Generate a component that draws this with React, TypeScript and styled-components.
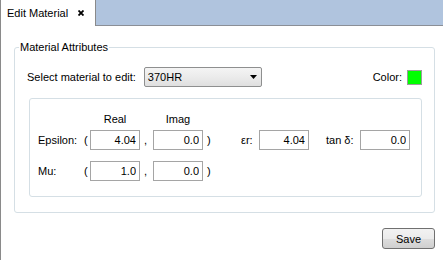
import styled, { createGlobalStyle } from 'styled-components';

const GlobalStyle = createGlobalStyle({
    body: {
        margin: 0,
        fontFamily: '"Liberation Sans", Arial, sans-serif',
        fontSize: '11px',
        color: '#000'
    }
});

const Window = styled.div({
    width: '443px',
    height: '260px',
    boxSizing: 'border-box',
    borderLeft: '1px solid #8a8a8a',
    background: '#fff',
    display: 'flex',
    flexDirection: 'column'
});

const TabBar = styled.div({
    height: '26px',
    display: 'flex',
    background: '#b0c4de'
});

const Tab = styled.div({
    width: '95px',
    boxSizing: 'border-box',
    paddingLeft: '6px',
    background: '#fff',
    borderRight: '1px solid #8a8a8a',
    display: 'flex',
    alignItems: 'center',
    gap: '10px',
    lineHeight: '13px'
});

const TabFiller = styled.div({
    flex: 1,
    borderBottom: '1px solid #8b8f96'
});

const Body = styled.div({
    flex: 1,
    display: 'flex',
    flexDirection: 'column',
    padding: '15px 8px 0 13px'
});

const Group = styled.fieldset({
    margin: 0,
    padding: '13px 12px 15px 12px',
    border: '1px solid #d5dfe5',
    borderRadius: '3px'
});

const Legend = styled.legend({
    padding: '0 1px',
    marginLeft: '-8px',
    lineHeight: '13px'
});

const TopRow = styled.div({
    height: '20px',
    display: 'flex',
    alignItems: 'center'
});

const ComboBox = styled.div({
    width: '118px',
    height: '20px',
    boxSizing: 'border-box',
    marginLeft: '8px',
    padding: '0 4px 0 3px',
    border: '1px solid #8e8f8f',
    borderRadius: '2px',
    background: 'linear-gradient(to bottom, #f4f4f4 0%, #ebebeb 50%, #dfdfdf 100%)',
    display: 'flex',
    alignItems: 'center',
    justifyContent: 'space-between'
});

const ColorLabel = styled.span({
    marginLeft: 'auto'
});

const Swatch = styled.div<{ $color: string }>((props) => ({
    width: '15px',
    height: '15px',
    boxSizing: 'border-box',
    marginLeft: '5px',
    border: '1px solid #9c9c9c',
    background: props.$color
}));

const InnerBox = styled.div({
    marginTop: '11px',
    marginLeft: '2px',
    padding: '13px 11px 15px 8px',
    border: '1px solid #d5dfe5',
    borderRadius: '3px'
});

const columns = '46px 6px 50px 13px 50px 38px 18px 50px 51px 50px';

const HeaderRow = styled.div({
    display: 'grid',
    gridTemplateColumns: columns,
    lineHeight: '14px',
    marginBottom: '4px'
});

const Row = styled.div({
    display: 'grid',
    gridTemplateColumns: columns,
    height: '20px',
    alignItems: 'center',
    '& + &': {
        marginTop: '11px'
    }
});

const Heading = styled.span<{ $col: number }>((props) => ({
    gridColumn: props.$col,
    textAlign: 'center'
}));

const Cell = styled.span<{ $pad?: number }>((props) => ({
    paddingLeft: (props.$pad || 0) + 'px',
    whiteSpace: 'nowrap'
}));

const Field = styled.input({
    width: '50px',
    height: '20px',
    boxSizing: 'border-box',
    margin: 0,
    padding: '0 3px',
    border: '1px solid #a5a5a5',
    borderRadius: 0,
    font: 'inherit',
    color: '#000',
    textAlign: 'right',
    outline: 'none'
});

const Footer = styled.div({
    display: 'flex',
    justifyContent: 'flex-end',
    marginTop: '15px'
});

const Button = styled.button({
    width: '53px',
    height: '21px',
    margin: 0,
    padding: 0,
    border: '1px solid #707070',
    borderRadius: '3px',
    background: 'linear-gradient(to bottom, #f2f2f2 0%, #ebebeb 50%, #dddddd 51%, #cfcfcf 100%)',
    font: 'inherit',
    color: '#000'
});

function CloseIcon() {
    return (
        <svg width="6" height="6" viewBox="0 0 6 6">
            <path d="M0.5 0.5 L5.5 5.5 M5.5 0.5 L0.5 5.5" stroke="#000" strokeWidth="1.8" />
        </svg>
    );
}

function ArrowDown() {
    return (
        <svg width="7" height="4" viewBox="0 0 7 4">
            <polygon points="0,0 7,0 3.5,4" fill="#000" />
        </svg>
    );
}

export default function App() {
    return (
        <>
            <GlobalStyle />
            <Window>
                <TabBar>
                    <Tab>
                        Edit Material
                        <CloseIcon />
                    </Tab>
                    <TabFiller />
                </TabBar>
                <Body>
                    <Group>
                        <Legend>Material Attributes</Legend>
                        <TopRow>
                            <span>Select material to edit:</span>
                            <ComboBox>
                                <span>370HR</span>
                                <ArrowDown />
                            </ComboBox>
                            <ColorLabel>Color:</ColorLabel>
                            <Swatch $color="#00ff00" />
                        </TopRow>
                        <InnerBox>
                            <HeaderRow>
                                <Heading $col={3}>Real</Heading>
                                <Heading $col={5}>Imag</Heading>
                            </HeaderRow>
                            <Row>
                                <Cell>Epsilon:</Cell>
                                <Cell>(</Cell>
                                <Field defaultValue="4.04" />
                                <Cell $pad={4}>,</Cell>
                                <Field defaultValue="0.0" />
                                <Cell $pad={4}>)</Cell>
                                <Cell>εr:</Cell>
                                <Field defaultValue="4.04" />
                                <Cell $pad={17}>tan δ:</Cell>
                                <Field defaultValue="0.0" />
                            </Row>
                            <Row>
                                <Cell>Mu:</Cell>
                                <Cell>(</Cell>
                                <Field defaultValue="1.0" />
                                <Cell $pad={4}>,</Cell>
                                <Field defaultValue="0.0" />
                                <Cell $pad={4}>)</Cell>
                            </Row>
                        </InnerBox>
                    </Group>
                    <Footer>
                        <Button>Save</Button>
                    </Footer>
                </Body>
            </Window>
        </>
    );
}
